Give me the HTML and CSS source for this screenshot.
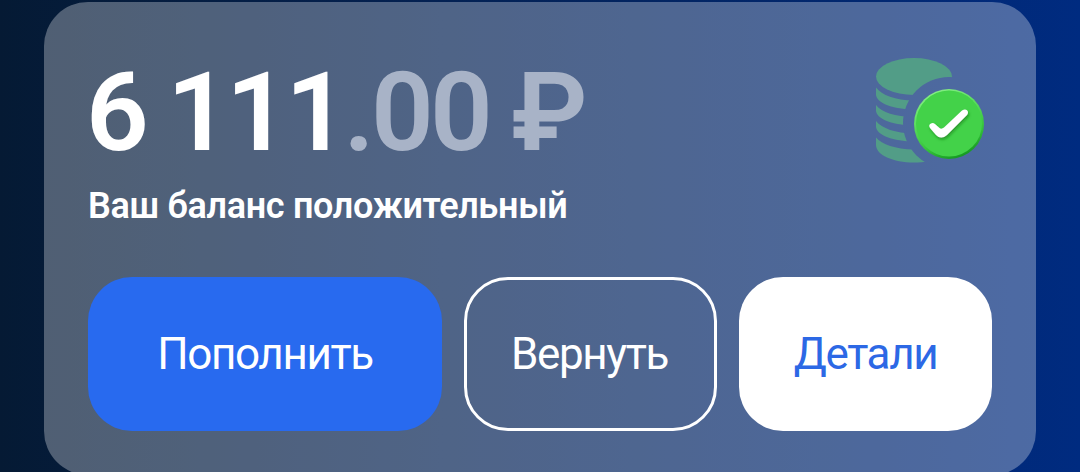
FILE: index.html
```html
<!DOCTYPE html>
<html lang="ru">
<head>
<meta charset="utf-8">
<title>Баланс</title>
<link rel="stylesheet" href="styles.css">
</head>
<body>
<main class="card">
  <header class="summary">
    <div class="balance">
      <div class="amount">6 111<span class="fraction">.00 ₽</span></div>
      <div class="status">Ваш баланс положительный</div>
    </div>
    <svg class="coins" width="112" height="108" viewBox="14 11 112 108" aria-hidden="true">
      <defs>
        <mask id="cut">
          <rect width="140" height="130" fill="#fff"/>
          <circle cx="89" cy="78" r="46" fill="#000"/>
        </mask>
        <linearGradient id="badge" x1="0.2" y1="0" x2="0.6" y2="1">
          <stop offset="0" stop-color="#8df08c"/>
          <stop offset=".35" stop-color="#5fdf62"/>
          <stop offset=".75" stop-color="#35c23b"/>
          <stop offset="1" stop-color="#169922"/>
        </linearGradient>
        <filter id="shade" x="-30%" y="-30%" width="160%" height="170%">
          <feDropShadow dx="1" dy="2" stdDeviation="1.5" flood-color="#087018" flood-opacity=".6"/>
        </filter>
      </defs>
      <g mask="url(#cut)" fill="#529d87">
        <ellipse cx="54" cy="31.5" rx="38" ry="18.5"/>
        <path d="M16 42.500C22 50.500 35 55 54 55.500V64.500C34 64.500 16 58 16 49.500Z"/>
        <path d="M16 60C22 67.500 35 71.500 54 72V80.500C34 80.500 16 74 16 65.500Z"/>
        <path d="M16 76C22 83.500 35 88 54 88.500V96.500C34 96.500 16 90 16 81.500Z"/>
        <path d="M16 92.500C22 99.500 35 104 54 104.500H92C92 111 75 117.500 54 117.500S16 110 16 100Z"/>
      </g>
      <circle cx="89" cy="79" r="35" fill="url(#badge)"/>
      <circle cx="89" cy="78.500" r="33" fill="#43d249"/>
      <path d="M71 78.500Q68 80 70 83L76 90Q81 95 87 90L107 70Q109 67 107 65.200Q105 63.500 102 65.500L84 82.500Q81.500 84.500 79.500 83L75 79Q73 77.500 71 78.500Z" fill="#fff" filter="url(#shade)"/>
    </svg>
  </header>
  <div class="actions">
    <button class="button primary">Пополнить</button>
    <button class="button outline">Вернуть</button>
    <button class="button light">Детали</button>
  </div>
</main>
</body>
</html>
```
FILE: styles.css
```css
* { box-sizing: border-box; }
html { height: 100%; overflow: hidden; }
body {
  height: 100%;
  margin: 0;
  padding: 2px 44px 0;
  overflow: hidden;
  background: linear-gradient(90deg, #051a34 0%, #002b80 100%);
  font-family: Roboto, "Noto Sans", sans-serif;
}
.card {
  height: 473px;
  padding: 54px 44px 44px;
  border-radius: 44px;
  background: rgba(255, 255, 255, .3);
}
.summary {
  display: flex;
  justify-content: space-between;
  height: 221px;
}
.amount {
  height: 112px;
  margin-left: -2px;
  padding-top: 2px;
  color: #fff;
  font-size: 110px;
  font-weight: 600;
  line-height: 110px;
  letter-spacing: -3.7px;
  word-spacing: -1.8px;
  white-space: pre;
}
.fraction {
  margin-left: -1px;
  color: #a8b3c7;
}
.status {
  margin-top: 16px;
  color: #fff;
  font-size: 36px;
  font-weight: 600;
  line-height: 44px;
  letter-spacing: -.33px;
}
.coins { margin-right: 6px; }
.actions {
  display: grid;
  grid-template-columns: 354px 253px 253px;
  gap: 22px;
}
.button {
  height: 154px;
  padding: 0;
  border: 0;
  border-radius: 44px;
  font: 400 44px/52px Roboto, "Noto Sans", sans-serif;
  letter-spacing: -1.4px;
  color: #fff;
}
.primary { background: #286aef; }
.outline {
  padding-right: 2px;
  border: 3px solid #fff;
  background: transparent;
}
.light { background: #fff; color: #2c68e5; }
```
